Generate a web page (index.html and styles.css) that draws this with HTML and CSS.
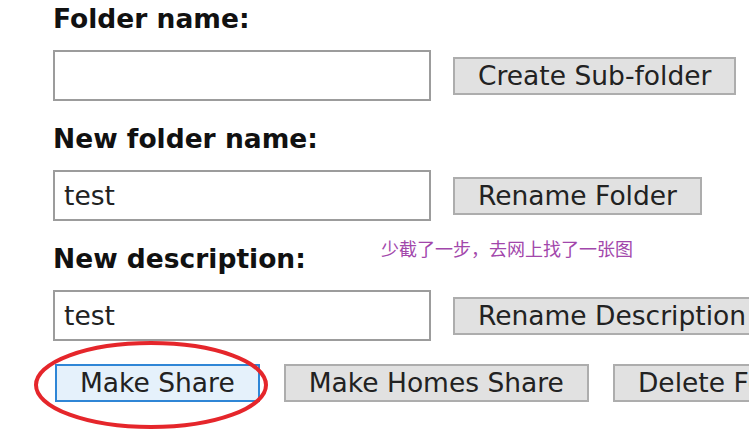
FILE: index.html
```html
<!DOCTYPE html>
<html lang="en">
<head>
<meta charset="utf-8">
<title>Folder</title>
<link rel="stylesheet" href="styles.css">
</head>
<body>
<div class="page">
  <div class="field">
    <div class="label">Folder name:</div>
    <div class="row">
      <input class="text" type="text" value="">
      <button class="btn">Create Sub-folder</button>
    </div>
  </div>
  <div class="field">
    <div class="label">New folder name:</div>
    <div class="row">
      <input class="text" type="text" value="test">
      <button class="btn">Rename Folder</button>
    </div>
  </div>
  <div class="field">
    <div class="label">New description:</div>
    <div class="row">
      <input class="text" type="text" value="test">
      <button class="btn">Rename Description</button>
    </div>
  </div>
  <div class="actions">
    <button class="btn btn-focus">Make Share</button>
    <button class="btn">Make Homes Share</button>
    <button class="btn">Delete Folder</button>
    <svg class="circle" width="250" height="100" viewBox="0 0 250 100">
      <ellipse cx="125" cy="50" rx="115" ry="42" fill="none" stroke="#e5262b" stroke-width="4"/>
    </svg>
  </div>
  <div class="note">少截了一步，去网上找了一张图</div>
</div>
</body>
</html>
```
FILE: styles.css
```css
html, body {
  margin: 0;
  padding: 0;
  background: #ffffff;
}
.page {
  position: relative;
  width: 749px;
  height: 447px;
  overflow: hidden;
  padding: 4px 0 0 53px;
  box-sizing: border-box;
  font-family: "DejaVu Sans", Verdana, sans-serif;
  color: #1a1a1a;
}
.field {
  margin-bottom: 23px;
}
.label {
  font-weight: bold;
  font-size: 26.5px;
  line-height: 30px;
  height: 30px;
  margin-bottom: 16px;
  color: #111;
}
.row {
  display: flex;
  align-items: center;
  gap: 22px;
  white-space: nowrap;
}
.text {
  flex: none;
  width: 378px;
  height: 51px;
  box-sizing: border-box;
  border: 2px solid #9c9c9c;
  padding: 0 9px;
  font-family: "DejaVu Sans", Verdana, sans-serif;
  font-size: 26.5px;
  color: #222;
  background: #fff;
  margin: 0;
  outline: none;
}
.btn {
  flex: none;
  height: 38px;
  box-sizing: border-box;
  border: 2px solid #adadad;
  background: #e1e1e1;
  padding: 0 23px;
  margin: 0;
  font-family: "DejaVu Sans", Verdana, sans-serif;
  font-size: 26.5px;
  line-height: 34px;
  color: #222;
  border-radius: 0;
}
.btn-focus {
  background: #e5f1fb;
  border-color: #2f86d6;
}
.actions {
  position: relative;
  display: flex;
  gap: 24px;
  padding-left: 2px;
  white-space: nowrap;
}
.circle {
  position: absolute;
  left: -27px;
  top: -29px;
}
.note {
  position: absolute;
  left: 381px;
  top: 235px;
  font-family: "Noto Sans CJK SC", sans-serif;
  font-size: 18px;
  line-height: 26px;
  color: #a247ab;
}
```
